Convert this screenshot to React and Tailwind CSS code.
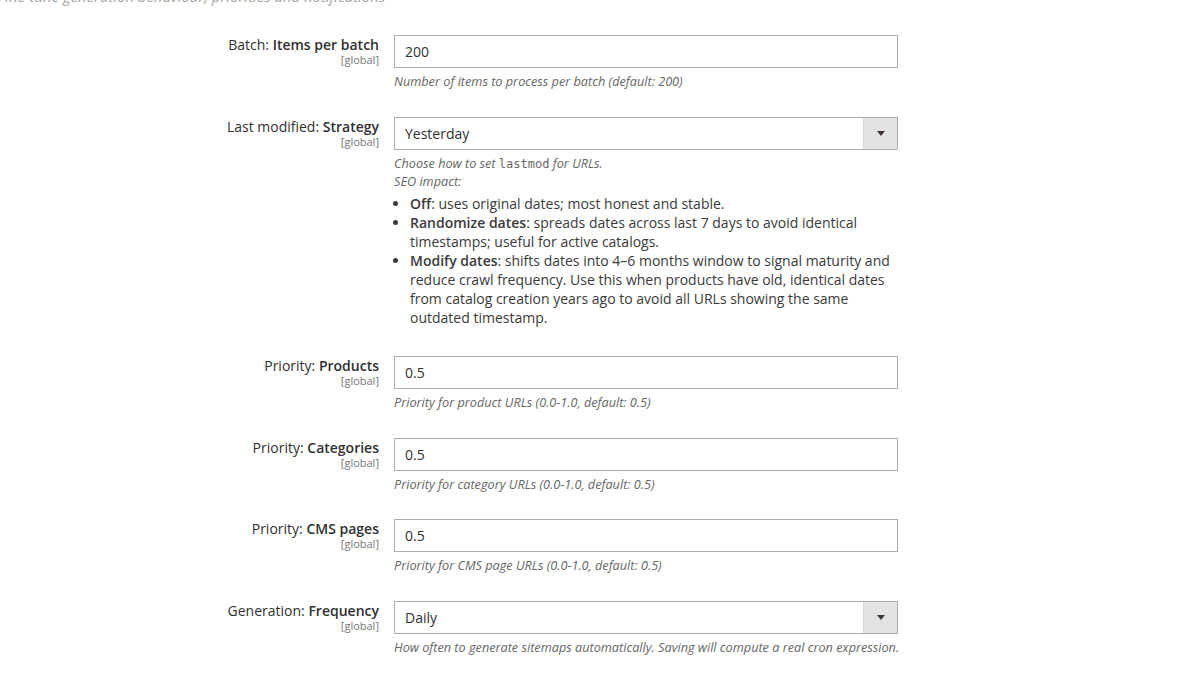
import React from "react";

const font = { fontFamily: '"Open Sans", "Noto Sans", sans-serif' };

function Label({ prefix, title }) {
  return (
    <div className="w-[379px] shrink-0 text-right">
      <div className="text-[14px] leading-[20px] text-[#303030]">
        {prefix} <span className="font-semibold">{title}</span>
      </div>
      <div className="-mt-[1px] text-[11px] leading-[11px] text-[#777]">[global]</div>
    </div>
  );
}

function TextInput({ value }) {
  return (
    <div className="h-[33px] w-[504px] border border-[#adadad] bg-white px-[10px] flex items-center text-[14px] text-[#303030]">
      {value}
    </div>
  );
}

function SelectInput({ value }) {
  return (
    <div className="h-[33px] w-[504px] border border-[#adadad] bg-white flex items-stretch text-[14px] text-[#303030]">
      <div className="flex-1 flex items-center px-[10px]">{value}</div>
      <div className="w-[34px] bg-[#e3e3e3] border-l border-[#d8d8d8] flex items-center justify-center">
        <svg width="8" height="5" viewBox="0 0 8 5">
          <path d="M0 0 H8 L4 5 Z" fill="#41362f" />
        </svg>
      </div>
    </div>
  );
}

function Note({ children }) {
  return (
    <div className="mt-[5px] w-[504px] text-[12.7px] leading-[17px] italic text-[#666] whitespace-nowrap">
      {children}
    </div>
  );
}

function Row({ prefix, title, control, note }) {
  return (
    <div className="flex items-start mb-[26.5px]">
      <Label prefix={prefix} title={title} />
      <div className="ml-[15px]">
        {control}
        {note}
      </div>
    </div>
  );
}

export default function App() {
  return (
    <div className="w-full h-[685px] overflow-hidden bg-white" style={font}>
      <div className="-mt-[14px] -ml-[2px] text-[14.9px] leading-[20px] italic text-[#a3a3a3] whitespace-nowrap">
        Fine-tune generation behaviour, priorities and notifications
      </div>
      <div className="mt-[29px]">
        <Row
          prefix="Batch:"
          title="Items per batch"
          control={<TextInput value="200" />}
          note={<Note>Number of items to process per batch (default: 200)</Note>}
        />
        <Row
          prefix="Last modified:"
          title="Strategy"
          control={<SelectInput value="Yesterday" />}
          note={
            <div className="mt-[5px] w-[504px]">
              <div className="text-[12.7px] leading-[17px] italic text-[#666]">
                Choose how to set{" "}
                <code
                  className="not-italic text-[12px]"
                  style={{ fontFamily: '"DejaVu Sans Mono", "Liberation Mono", monospace' }}
                >
                  lastmod
                </code>{" "}
                for URLs.
                <br />
                SEO impact:
              </div>
              <ul className="list-disc pl-[16px] mt-[4px] mb-[3px] text-[14px] leading-[19px] text-[#3a3a3a]">
                <li>
                  <span className="font-semibold">Off</span>: uses original dates; most honest and stable.
                </li>
                <li>
                  <span className="font-semibold">Randomize dates</span>: spreads dates across last 7 days to
                  avoid identical timestamps; useful for active catalogs.
                </li>
                <li>
                  <span className="font-semibold">Modify dates</span>: shifts dates into 4–6 months window to
                  signal maturity and reduce crawl frequency. Use this when products have old, identical dates
                  from catalog creation years ago to avoid all URLs showing the same outdated timestamp.
                </li>
              </ul>
            </div>
          }
        />
        <Row
          prefix="Priority:"
          title="Products"
          control={<TextInput value="0.5" />}
          note={<Note>Priority for product URLs (0.0-1.0, default: 0.5)</Note>}
        />
        <Row
          prefix="Priority:"
          title="Categories"
          control={<TextInput value="0.5" />}
          note={<Note>Priority for category URLs (0.0-1.0, default: 0.5)</Note>}
        />
        <Row
          prefix="Priority:"
          title="CMS pages"
          control={<TextInput value="0.5" />}
          note={<Note>Priority for CMS page URLs (0.0-1.0, default: 0.5)</Note>}
        />
        <Row
          prefix="Generation:"
          title="Frequency"
          control={<SelectInput value="Daily" />}
          note={
            <Note>
              How often to generate sitemaps automatically. Saving will compute a real cron expression.
            </Note>
          }
        />
      </div>
    </div>
  );
}
